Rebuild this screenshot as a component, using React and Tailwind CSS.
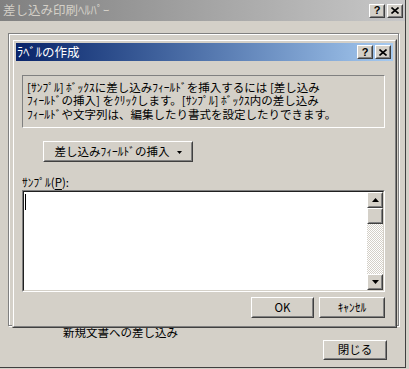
import React from 'react';

const Raised = ({ className = '', children }) => (
  <div className={`border border-t-white border-l-white border-r-[#404040] border-b-[#404040] bg-[#d4d0c8] ${className}`}>
    <div className="w-full h-full border border-t-[#d4d0c8] border-l-[#d4d0c8] border-r-[#808080] border-b-[#808080] flex items-center justify-center">
      {children}
    </div>
  </div>
);

const CapButtons = () => (
  <div className="flex gap-[2px]">
    <Raised className="w-[16px] h-[14px]">
      <span className="text-[11px] font-bold leading-none text-black font-['Liberation_Sans',sans-serif]">?</span>
    </Raised>
    <Raised className="w-[16px] h-[14px]">
      <svg width="8" height="7" viewBox="0 0 8 7">
        <path d="M0.5 0.5 L7.5 6.5 M7.5 0.5 L0.5 6.5" stroke="#000" strokeWidth="1.6" />
      </svg>
    </Raised>
  </div>
);

const Arrow = ({ up }) => (
  <svg width="7" height="4" viewBox="0 0 7 4">
    <path d={up ? 'M3.5 0 L7 4 L0 4 Z' : 'M0 0 L7 0 L3.5 4 Z'} fill="#000" />
  </svg>
);

const LabelDialog = () => (
  <div className="absolute left-[12px] top-[39px] w-[385px] h-[289px] border border-t-[#d4d0c8] border-l-[#d4d0c8] border-r-[#404040] border-b-[#404040]">
    <div className="w-full h-full border border-t-white border-l-white border-r-[#808080] border-b-[#808080] p-[2px] bg-[#d4d0c8] flex flex-col">
      <div className="h-[18px] shrink-0 bg-gradient-to-r from-[#0a246a] to-[#a6caf0] flex items-center justify-between pl-[1px] pr-[2px]">
        <span className="text-white text-[12.5px] leading-none">ﾗﾍﾞﾙの作成</span>
        <CapButtons />
      </div>
      <div className="flex flex-col pl-[6px] pr-[8px]">
        <div className="mt-[14px] h-[53px] border border-t-[#808080] border-l-[#808080] border-r-white border-b-white pl-[4px] pt-[5px] leading-[13.3px] whitespace-pre">
          {'[ｻﾝﾌﾟﾙ] ﾎﾞｯｸｽに差し込みﾌｨｰﾙﾄﾞを挿入するには [差し込み\nﾌｨｰﾙﾄﾞの挿入] をｸﾘｯｸします。[ｻﾝﾌﾟﾙ] ﾎﾞｯｸｽ内の差し込み\nﾌｨｰﾙﾄﾞや文字列は、編集したり書式を設定したりできます。'}
        </div>
        <Raised className="mt-[13px] ml-[21px] w-[150px] h-[21px]">
          <span className="leading-none">差し込みﾌｨｰﾙﾄﾞの挿入</span>
          <span className="ml-[7px] mt-[1px] flex">
            <svg width="5" height="3" viewBox="0 0 5 3"><path d="M0 0 L5 0 L2.5 3 Z" fill="#000" /></svg>
          </span>
        </Raised>
        <div className="mt-[14px] h-[14px] leading-[13px]">
          ｻﾝﾌﾟﾙ(<span className="underline underline-offset-2">P</span>):
        </div>
        <div className="h-[102px] border border-t-[#808080] border-l-[#808080] border-r-white border-b-white">
          <div className="w-full h-full border border-t-[#202020] border-l-[#202020] border-r-[#d4d0c8] border-b-[#d4d0c8] bg-white flex">
            <div className="flex-1 pl-[1px] pt-[2px]">
              <div className="w-[1px] h-[16px] bg-black" />
            </div>
            <div className="w-[16px] h-full flex flex-col bg-[image:repeating-conic-gradient(#d4d0c8_0%_25%,#ffffff_0%_50%)] bg-size-[2px_2px]">
              <Raised className="w-[16px] h-[16px]"><Arrow up /></Raised>
              <Raised className="w-[16px] h-[16px]" />
              <div className="flex-1" />
              <Raised className="w-[16px] h-[16px]"><Arrow /></Raised>
            </div>
          </div>
        </div>
        <div className="mt-[5px] flex justify-end gap-[5px]">
          <Raised className="w-[63px] h-[21px]"><span className="leading-none">OK</span></Raised>
          <Raised className="w-[66px] h-[21px]"><span className="leading-none">ｷｬﾝｾﾙ</span></Raised>
        </div>
      </div>
    </div>
  </div>
);

export default function App() {
  return (
    <div className="w-[409px] h-[369px] bg-[#d4d0c8] overflow-hidden text-black text-[11.5px] font-['Noto_Sans_CJK_JP',sans-serif]">
      <div className="relative w-[406px] h-[368px] border-r border-b border-r-[#404040] border-b-[#404040] flex flex-col">
        <div className="h-[21px] shrink-0 bg-gradient-to-r from-[#808080] to-[#c8c8c8] flex items-center justify-between pl-[3px] pr-[2px]">
          <span className="text-[#d4d0c8] text-[12.5px] leading-none">差し込み印刷ﾍﾙﾊﾟｰ</span>
          <CapButtons />
        </div>
        <div className="flex flex-col">
          <div className="ml-[8px] mt-[12px] w-[391px] h-[293px] border border-[#808080] shadow-[inset_1px_1px_0_#fff,1px_1px_0_#fff]" />
          <div className="pl-[63px] leading-[13px] h-[13px]">新規文書への差し込み</div>
          <div className="flex justify-end pr-[18px] mt-[1px]">
            <Raised className="w-[64px] h-[20px]"><span className="leading-none">閉じる</span></Raised>
          </div>
        </div>
        <LabelDialog />
      </div>
    </div>
  );
}
